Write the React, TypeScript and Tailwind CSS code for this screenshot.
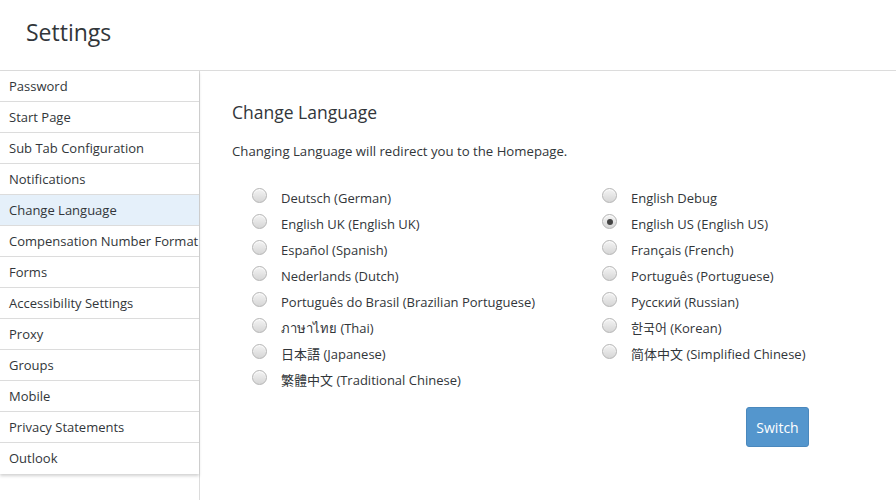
import React, { useState } from "react";

const NAV_ITEMS = [
  "Password",
  "Start Page",
  "Sub Tab Configuration",
  "Notifications",
  "Change Language",
  "Compensation Number Format",
  "Forms",
  "Accessibility Settings",
  "Proxy",
  "Groups",
  "Mobile",
  "Privacy Statements",
  "Outlook",
];

const LEFT_LANGS = [
  "Deutsch (German)",
  "English UK (English UK)",
  "Español (Spanish)",
  "Nederlands (Dutch)",
  "Português do Brasil (Brazilian Portuguese)",
  "ภาษาไทย (Thai)",
  "日本語 (Japanese)",
  "繁體中文 (Traditional Chinese)",
];

const RIGHT_LANGS = [
  "English Debug",
  "English US (English US)",
  "Français (French)",
  "Português (Portuguese)",
  "Русский (Russian)",
  "한국어 (Korean)",
  "简体中文 (Simplified Chinese)",
];

function Radio({ checked }: { checked: boolean }) {
  return (
    <span className="w-[15px] h-[15px] rounded-full border border-[#b5b5b5] bg-gradient-to-b from-[#f4f4f4] to-[#d6d6d6] shadow-[inset_0_1px_1px_rgba(255,255,255,0.8)] flex items-center justify-center shrink-0">
      {checked && <span className="w-[6px] h-[6px] rounded-full bg-[#444]" />}
    </span>
  );
}

function LangOption({ label, checked, onPick }: { label: string; checked: boolean; onPick: () => void }) {
  return (
    <button type="button" onClick={onPick} className="h-[26px] flex items-start gap-[14px] text-left">
      <span className="pt-[1px]">
        <Radio checked={checked} />
      </span>
      <span className="text-[13px] leading-[20px] pt-[1px] text-[#32363a]">{label}</span>
    </button>
  );
}

export default function App() {
  const [lang, setLang] = useState("English US (English US)");

  return (
    <div
      className="w-[896px] h-[500px] bg-white overflow-hidden flex flex-col text-[#32363a]"
      style={{ fontFamily: '"Open Sans", "Noto Sans", "Noto Sans CJK JP", sans-serif' }}
    >
      {/* Page header */}
      <div className="h-[71px] shrink-0 border-b border-[#dcdcdc] flex items-center pl-[26px] pb-[6px]">
        <h1 className="text-[23px] text-[#32363a]">Settings</h1>
      </div>

      <div className="flex flex-1 min-h-0">
        {/* Sidebar */}
        <div className="w-[200px] shrink-0 border-r border-[#dcdcdc]">
          <ul className="shadow-[0_2px_3px_rgba(0,0,0,0.18)]">
            {NAV_ITEMS.map((item) => (
              <li
                key={item}
                className={`h-[31px] border-b border-[#dcdcdc] last:border-b-0 pl-[9px] pt-[1px] flex items-center whitespace-nowrap overflow-hidden text-[13px] ${
                  item === "Change Language" ? "bg-[#e5f0fa]" : ""
                }`}
              >
                {item}
              </li>
            ))}
          </ul>
        </div>

        {/* Content */}
        <div className="flex-1 pl-[32px] pt-[29px]">
          <h2 className="text-[17.5px] leading-[24px]">Change Language</h2>
          <p className="mt-[17px] text-[13.2px] leading-[20px]">Changing Language will redirect you to the Homepage.</p>

          <div className="mt-[26px] pl-[20px] flex">
            <div className="w-[350px] flex flex-col">
              {LEFT_LANGS.map((l) => (
                <LangOption key={l} label={l} checked={lang === l} onPick={() => setLang(l)} />
              ))}
            </div>
            <div className="flex flex-col">
              {RIGHT_LANGS.map((l) => (
                <LangOption key={l} label={l} checked={lang === l} onPick={() => setLang(l)} />
              ))}
            </div>
          </div>

          <div className="w-[577px] flex justify-end mt-[12px]">
            <button
              type="button"
              className="h-[40px] w-[63px] rounded-[3px] bg-[#5496cd] border border-[#4a88bd] text-white text-[14px]"
            >
              Switch
            </button>
          </div>
        </div>
      </div>
    </div>
  );
}
